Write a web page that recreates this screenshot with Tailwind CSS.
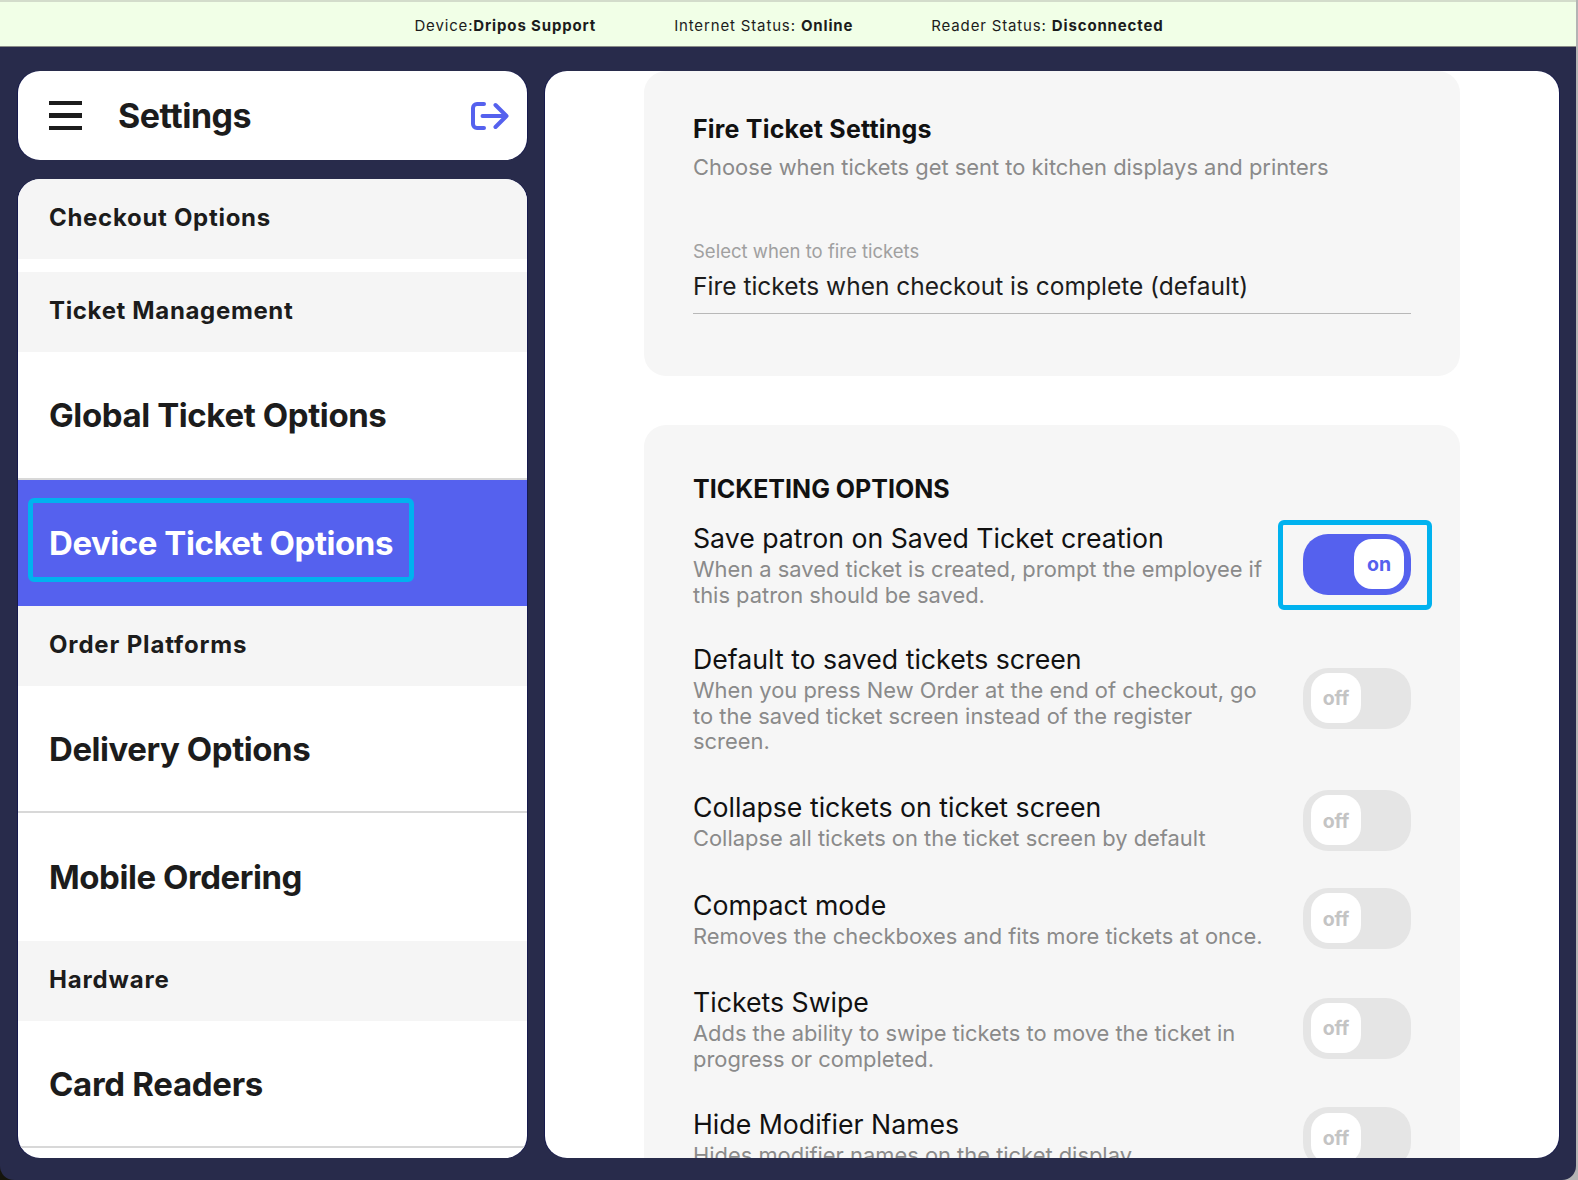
<!DOCTYPE html>
<html lang="en">
<head>
  <meta charset="UTF-8" />
  <meta name="viewport" content="width=device-width, initial-scale=1.0">
  <title>Settings</title>
  <script src="https://cdn.jsdelivr.net/npm/@tailwindcss/browser@4"></script>
</head>
<body class="bg-[#b4b4b4] h-[1180px] w-[1578px] overflow-hidden font-['Inter',sans-serif]">
<div class="absolute left-0 bottom-0 w-[16px] h-[16px] bg-[#15150c]"></div>
<div class="relative w-[1576px] h-[1180px] bg-[#282b4b] rounded-b-[14px] overflow-hidden">

  <!-- status bar -->
  <div class="h-[47px] pt-[5px] bg-[#f1ffe7] border-t-2 border-[#d3dccb] border-b border-b-[#8a8d88] flex justify-center items-center gap-[78px] text-[15px] tracking-[0.85px] text-[#1c1c1c] pl-[2px]">
    <div>Device:<span class="font-bold">Dripos Support</span></div>
    <div>Internet Status: <span class="font-bold">Online</span></div>
    <div>Reader Status: <span class="font-bold">Disconnected</span></div>
  </div>

  <div class="flex gap-[18px] pl-[18px] pt-[24px]">

    <!-- left column -->
    <div class="w-[509px] shrink-0 flex flex-col gap-[19px]">
      <div class="h-[89px] bg-white rounded-[22px] flex items-center pl-[31px] pr-[18px] shadow-[1px_0_0_#161a4e,-1px_0_0_#161a4e]">
        <div class="w-[33px] flex flex-col gap-[8px]">
          <div class="h-[4.5px] bg-[#1c1c1c]"></div>
          <div class="h-[4.5px] bg-[#1c1c1c]"></div>
          <div class="h-[4.5px] bg-[#1c1c1c]"></div>
        </div>
        <div class="ml-[36px] text-[34px] font-bold tracking-[-0.5px] text-[#1c1c1c]">Settings</div>
        <svg class="ml-auto" width="38" height="28" viewBox="0 0 38 28" fill="none" stroke="#5561ee" stroke-width="4" stroke-linecap="round" stroke-linejoin="round">
          <path d="M13 2H6a4 4 0 0 0-4 4v16a4 4 0 0 0 4 4h7" />
          <path d="M11.5 14H35.5M24.5 3L35.5 14L24.5 25" />
        </svg>
      </div>

      <div class="h-[979px] bg-white rounded-[22px] overflow-hidden flex flex-col shadow-[1px_0_0_#161a4e,-1px_0_0_#161a4e]">
        <div class="h-[80px] shrink-0 bg-[#f5f5f5] flex items-center pl-[31px] pb-[2px] text-[24px] font-bold tracking-[0.7px] text-[#1c1c1c]">Checkout Options</div>
        <div class="h-[13px] shrink-0"></div>
        <div class="h-[80px] shrink-0 bg-[#f5f5f5] flex items-center pl-[31px] pb-[2px] text-[24px] font-bold tracking-[0.65px] text-[#1c1c1c]">Ticket Management</div>
        <div class="h-[128px] shrink-0 border-b-2 border-[#d8d8d8] flex items-center pl-[31px] pt-[2px] text-[33px] font-bold tracking-[-0.4px] text-[#1c1c1c]">Global Ticket Options</div>
        <div class="h-[126px] shrink-0 bg-[#5561ee] flex items-center pl-[10px] pb-[6px]">
          <div class="h-[84px] border-[5px] border-[#00b2ef] rounded-[6px] flex items-center pl-[16px] pr-[16px] pt-[8px] text-[33px] font-bold tracking-[-0.45px] text-white">Device Ticket Options</div>
        </div>
        <div class="h-[80px] shrink-0 bg-[#f5f5f5] flex items-center pl-[31px] pb-[2px] text-[24px] font-bold tracking-[0.85px] text-[#1c1c1c]">Order Platforms</div>
        <div class="h-[127px] shrink-0 border-b-2 border-[#d8d8d8] flex items-center pl-[31px] pt-[2px] text-[33px] font-bold tracking-[-0.45px] text-[#1c1c1c]">Delivery Options</div>
        <div class="h-[128px] shrink-0 flex items-center pl-[31px] pt-[2px] text-[33px] font-bold tracking-[-0.45px] text-[#1c1c1c]">Mobile Ordering</div>
        <div class="h-[80px] shrink-0 bg-[#f5f5f5] flex items-center pl-[31px] pb-[2px] text-[24px] font-bold tracking-[0.85px] text-[#1c1c1c]">Hardware</div>
        <div class="h-[127px] shrink-0 border-b-2 border-[#d8d8d8] flex items-center pl-[31px] pt-[2px] text-[33px] font-bold tracking-[-0.3px] text-[#1c1c1c]">Card Readers</div>
      </div>
    </div>

    <!-- right panel -->
    <div class="w-[1014px] shrink-0 h-[1087px] bg-white rounded-[22px] overflow-hidden px-[99px] shadow-[1px_0_0_#161a4e,-1px_0_0_#161a4e]">
      <div class="h-[305px] bg-[#f6f6f6] rounded-[22px] px-[49px] pt-[43px]">
        <div class="text-[25px] leading-[30px] font-bold tracking-[0.2px] text-[#111]">Fire Ticket Settings</div>
        <div class="mt-[8px] text-[21.9px] leading-[30px] text-[#8a8a8a]">Choose when tickets get sent to kitchen displays and printers</div>
        <div class="mt-[57px] text-[18.5px] leading-[24px] text-[#a0a0a0]">Select when to fire tickets</div>
        <div class="mt-[7px] pb-[11px] w-[718px] border-b border-[#b8b8b8] text-[24.5px] leading-[32px] text-[#1c1c1c]">Fire tickets when checkout is complete (default)</div>
      </div>

      <div class="mt-[49px] bg-[#f6f6f6] rounded-[22px] px-[49px] pt-[49px] h-[800px]">
        <div class="text-[25px] leading-[30px] font-bold text-[#111]">TICKETING OPTIONS</div>
        <div class="mt-[18px] flex flex-col gap-[37px]">

          <div class="flex items-center justify-between">
            <div class="w-[580px]">
              <div class="text-[26.7px] leading-[33px] text-[#111]">Save patron on Saved Ticket creation</div>
              <div class="translate-y-[2px] text-[21.9px] leading-[25.6px] text-[#8a8a8a]">When a saved ticket is created, prompt the employee if this patron should be saved.</div>
            </div>
            <div class="relative w-[108px] h-[61px] rounded-[25px] bg-[#5561ee] flex items-center justify-end pr-[7px]">
              <div class="absolute -left-[25px] -right-[21px] -top-[14px] -bottom-[15px] border-[5px] border-[#00b2ef] rounded-[6px]"></div>
              <div class="w-[50px] h-[50px] pt-[2px] rounded-[18px] bg-white flex items-center justify-center text-[19.5px] font-bold text-[#5561ee]">on</div>
            </div>
          </div>

          <div class="flex items-center justify-between">
            <div class="w-[580px]">
              <div class="text-[26.7px] leading-[33px] text-[#111]">Default to saved tickets screen</div>
              <div class="translate-y-[2px] text-[21.9px] leading-[25.6px] text-[#8a8a8a]">When you press New Order at the end of checkout, go to the saved ticket screen instead of the register screen.</div>
            </div>
            <div class="w-[108px] h-[61px] rounded-[25px] bg-[#e5e5e5] flex items-center pl-[8px]">
              <div class="w-[50px] h-[50px] pt-[2px] rounded-[18px] bg-white flex items-center justify-center text-[19.5px] font-bold text-[#c4c4c4]">off</div>
            </div>
          </div>

          <div class="flex items-center justify-between">
            <div class="w-[580px]">
              <div class="text-[26.7px] leading-[33px] text-[#111]">Collapse tickets on ticket screen</div>
              <div class="translate-y-[2px] text-[21.9px] leading-[25.6px] text-[#8a8a8a]">Collapse all tickets on the ticket screen by default</div>
            </div>
            <div class="w-[108px] h-[61px] rounded-[25px] bg-[#e5e5e5] flex items-center pl-[8px]">
              <div class="w-[50px] h-[50px] pt-[2px] rounded-[18px] bg-white flex items-center justify-center text-[19.5px] font-bold text-[#c4c4c4]">off</div>
            </div>
          </div>

          <div class="flex items-center justify-between">
            <div class="w-[580px]">
              <div class="text-[26.7px] leading-[33px] text-[#111]">Compact mode</div>
              <div class="translate-y-[2px] text-[21.9px] leading-[25.6px] text-[#8a8a8a]">Removes the checkboxes and fits more tickets at once.</div>
            </div>
            <div class="w-[108px] h-[61px] rounded-[25px] bg-[#e5e5e5] flex items-center pl-[8px]">
              <div class="w-[50px] h-[50px] pt-[2px] rounded-[18px] bg-white flex items-center justify-center text-[19.5px] font-bold text-[#c4c4c4]">off</div>
            </div>
          </div>

          <div class="flex items-center justify-between">
            <div class="w-[580px]">
              <div class="text-[26.7px] leading-[33px] text-[#111]">Tickets Swipe</div>
              <div class="translate-y-[2px] text-[21.9px] leading-[25.6px] text-[#8a8a8a]">Adds the ability to swipe tickets to move the ticket in progress or completed.</div>
            </div>
            <div class="w-[108px] h-[61px] rounded-[25px] bg-[#e5e5e5] flex items-center pl-[8px]">
              <div class="w-[50px] h-[50px] pt-[2px] rounded-[18px] bg-white flex items-center justify-center text-[19.5px] font-bold text-[#c4c4c4]">off</div>
            </div>
          </div>

          <div class="flex items-center justify-between">
            <div class="w-[580px]">
              <div class="text-[26.7px] leading-[33px] text-[#111]">Hide Modifier Names</div>
              <div class="translate-y-[2px] text-[21.9px] leading-[25.6px] text-[#8a8a8a]">Hides modifier names on the ticket display.</div>
            </div>
            <div class="w-[108px] h-[61px] rounded-[25px] bg-[#e5e5e5] flex items-center pl-[8px]">
              <div class="w-[50px] h-[50px] pt-[2px] rounded-[18px] bg-white flex items-center justify-center text-[19.5px] font-bold text-[#c4c4c4]">off</div>
            </div>
          </div>

        </div>
      </div>
    </div>
  </div>
</div>
</body>
</html>
